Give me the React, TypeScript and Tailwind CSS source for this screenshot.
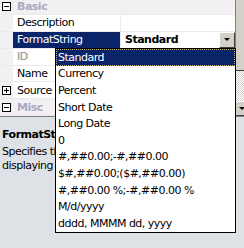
import React from "react";

function MinusBox() {
  return (
    <div className="relative w-[9px] h-[9px] border border-black bg-white shrink-0">
      <div className="absolute left-[1px] top-[3px] w-[5px] h-[1px] bg-black" />
    </div>
  );
}
function PlusBox() {
  return (
    <div className="relative w-[9px] h-[9px] border border-black bg-white shrink-0">
      <div className="absolute left-[1px] top-[3px] w-[5px] h-[1px] bg-black" />
      <div className="absolute left-[3px] top-[1px] w-[1px] h-[5px] bg-black" />
    </div>
  );
}

function Category({ label, h = "h-[17px]" }: { label: string; h?: string }) {
  return (
    <div className={`flex items-center ${h} bg-[#f3f0f4] border-b border-[#ebe8ee]`}>
      <div className="w-[13px] flex justify-center">
        <MinusBox />
      </div>
      <span className="ml-[4px] font-bold text-[#aaa8c0]">{label}</span>
    </div>
  );
}

function Prop({
  name,
  gray,
  selected,
  plus,
  children,
}: {
  name: string;
  gray?: boolean;
  selected?: boolean;
  plus?: boolean;
  children?: React.ReactNode;
}) {
  return (
    <div className="flex h-[17px] border-b border-[#ebe8ee]">
      <div className="w-[13px] bg-[#f3f0f4] flex items-center justify-center">
        {plus ? <PlusBox /> : null}
      </div>
      <div
        className={`w-[108px] flex items-center pl-[4px] border-r border-[#ebe8ee] ${
          selected ? "bg-[#0a246a] text-white" : gray ? "text-[#8c8c8c]" : "text-black"
        }`}
      >
        {name}
      </div>
      <div className="flex-1 flex items-center">{children}</div>
    </div>
  );
}

const items = [
  "Standard",
  "Currency",
  "Percent",
  "Short Date",
  "Long Date",
  "0",
  "#,##0.00;-#,##0.00",
  "$#,##0.00;($#,##0.00)",
  "#,##0.00 %;-#,##0.00 %",
  "M/d/yyyy",
  "dddd, MMMM dd, yyyy",
];

export default function App() {
  return (
    <div className="relative w-[244px] h-[248px] overflow-hidden bg-[#dee2e7] font-['DejaVu_Sans',sans-serif] text-[11px] tracking-[-0.5px] leading-none">
      <div className="flex h-[117px] border-b border-[#808080]">
        <div className="w-[235px] flex flex-col bg-white overflow-hidden">
          <Category label="Basic" h="h-[15px]" />
          <Prop name="Description" />
          <Prop name="FormatString" selected>
            <div className="flex-1 flex items-center h-full">
              <span className="ml-[4px] font-bold text-black">Standard</span>
            </div>
            <div className="w-[16px] h-[16px] bg-[#d4d0c8] border-t border-l border-white border-r border-b border-r-[#404040] border-b-[#404040] flex items-center justify-center">
              <div className="w-0 h-0 border-l-[3px] border-r-[3px] border-t-[3px] border-l-transparent border-r-transparent border-t-black" />
            </div>
          </Prop>
          <Prop name="ID" gray />
          <Prop name="Name" />
          <Prop name="Source" plus />
          <Category label="Misc" />
        </div>
        <div className="w-[9px] flex flex-col border-l border-[#808080]">
          <div className="h-[71px] bg-[#d4d0c8] border-b border-[#404040]" />
          <div className="h-[30px] bg-[repeating-conic-gradient(#d4d0c8_0_25%,#ffffff_0_50%)] bg-[length:2px_2px]" />
          <div className="flex-1 bg-[#d4d0c8] border-t border-white border-b border-b-[#404040] flex items-center pl-[3px]">
            <div className="w-0 h-0 border-l-[3px] border-r-[3px] border-t-[3px] border-l-transparent border-r-transparent border-t-black" />
          </div>
        </div>
      </div>
      <div className="w-[55px] overflow-hidden pt-[12px] pl-[2px]">
        <div className="font-bold text-black h-[14px] whitespace-nowrap">FormatString</div>
        <div className="text-black leading-[14px] mt-[2px] whitespace-nowrap">
          <div>Specifies the format used for</div>
          <div>displaying the value.</div>
        </div>
      </div>
      <div className="absolute left-[55px] top-[48px] w-[181px] h-[185px] bg-white border border-black flex flex-col">
        {items.map((it, i) => (
          <div
            key={it}
            className={`h-[16.6px] flex items-center pl-[2px] whitespace-nowrap ${
              i === 0 ? "bg-[#0a246a] text-white outline-1 outline-dotted outline-[#c8b478] -outline-offset-1" : "text-black"
            }`}
          >
            {it}
          </div>
        ))}
      </div>
    </div>
  );
}
